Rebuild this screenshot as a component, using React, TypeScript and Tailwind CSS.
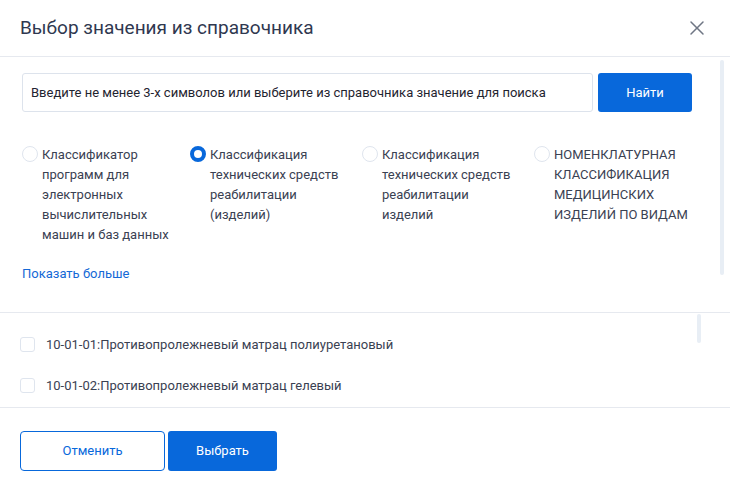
import { X } from "lucide-react";

const options = [
  { id: "1", label: "Классификатор программ для электронных вычислительных машин и баз данных" },
  { id: "2", label: "Классификация технических средств реабилитации (изделий)" },
  { id: "3", label: "Классификация технических средств реабилитации изделий" },
  { id: "4", label: "НОМЕНКЛАТУРНАЯ КЛАССИФИКАЦИЯ МЕДИЦИНСКИХ ИЗДЕЛИЙ ПО ВИДАМ" },
];

const items = [
  "10-01-01:Противопролежневый матрац полиуретановый",
  "10-01-02:Противопролежневый матрац гелевый",
];

function Radio({ checked }: { checked: boolean }) {
  return checked ? (
    <span className="mt-[1px] box-border size-4 shrink-0 rounded-full border-[4px] border-[#0868db] bg-white" />
  ) : (
    <span className="mt-[1px] box-border size-4 shrink-0 rounded-full border border-[#dfe5ee] bg-white" />
  );
}

export default function App() {
  const selected = "2";

  return (
    <div className="flex h-[495px] w-[730px] flex-col bg-white font-['Roboto',sans-serif] text-[#2e3547]">
      {/* Header */}
      <div className="flex h-[57px] shrink-0 items-center justify-between border-b border-[#e6e9ef] pl-5 pr-[21px]">
        <h2 className="text-[19px] text-[#2f3850]">Выбор значения из справочника</h2>
        <X className="size-[24px] text-[#6f7684]" strokeWidth={1.5} />
      </div>

      {/* Search + classifiers */}
      <div className="relative flex h-[256px] shrink-0 flex-col border-b border-[#e6e9ef] pl-[22px] pr-[16px] pt-4">
        <div className="mr-[22px] flex gap-[5px]">
          <div className="flex h-[39px] flex-1 items-center rounded-[3px] border border-[#dde3ec] px-2 text-[13px] text-[#1f2430]">
            Введите не менее 3-х символов или выберите из справочника значение для поиска
          </div>
          <button className="h-[39px] w-[94px] rounded-[3px] bg-[#0868db] text-[13px] text-white">
            Найти
          </button>
        </div>

        <div className="mt-[33px] grid grid-cols-[168px_172px_172px_172px]">
          {options.map((o, i) => (
            <div key={o.id} className={i === 3 ? "flex gap-[4px]" : "flex gap-[4px] pr-[20px]"}>
              <Radio checked={o.id === selected} />
              <span className="text-[13px] leading-[20px] text-[#3a4152]">{o.label}</span>
            </div>
          ))}
        </div>

        <a className="mt-[19px] text-[13px] text-[#1469d6]">Показать больше</a>

        <div className="absolute right-[6px] top-[3px] h-[215px] w-[4px] rounded-full bg-[#e8eef5]" />
      </div>

      {/* Items */}
      <div className="relative flex h-[95px] shrink-0 flex-col gap-[21px] border-b border-[#e6e9ef] pl-5 pt-[22px]">
        {items.map((it) => (
          <div key={it} className="flex items-center gap-[11px]">
            <span className="box-border size-[15px] rounded-[3px] border border-[#dfe5ee] bg-white" />
            <span className="text-[13px] text-[#3a4152]">{it}</span>
          </div>
        ))}
        <div className="absolute right-[29px] top-[1px] h-[29px] w-[4px] rounded-full bg-[#e8eef5]" />
      </div>

      {/* Footer */}
      <div className="flex gap-[3px] pl-5 pt-[23px]">
        <button className="h-[40px] w-[145px] rounded-[4px] border border-[#0868db] bg-white text-[13px] text-[#0868db]">
          Отменить
        </button>
        <button className="h-[40px] w-[109px] rounded-[3px] bg-[#0868db] text-[13px] text-white">
          Выбрать
        </button>
      </div>
    </div>
  );
}
